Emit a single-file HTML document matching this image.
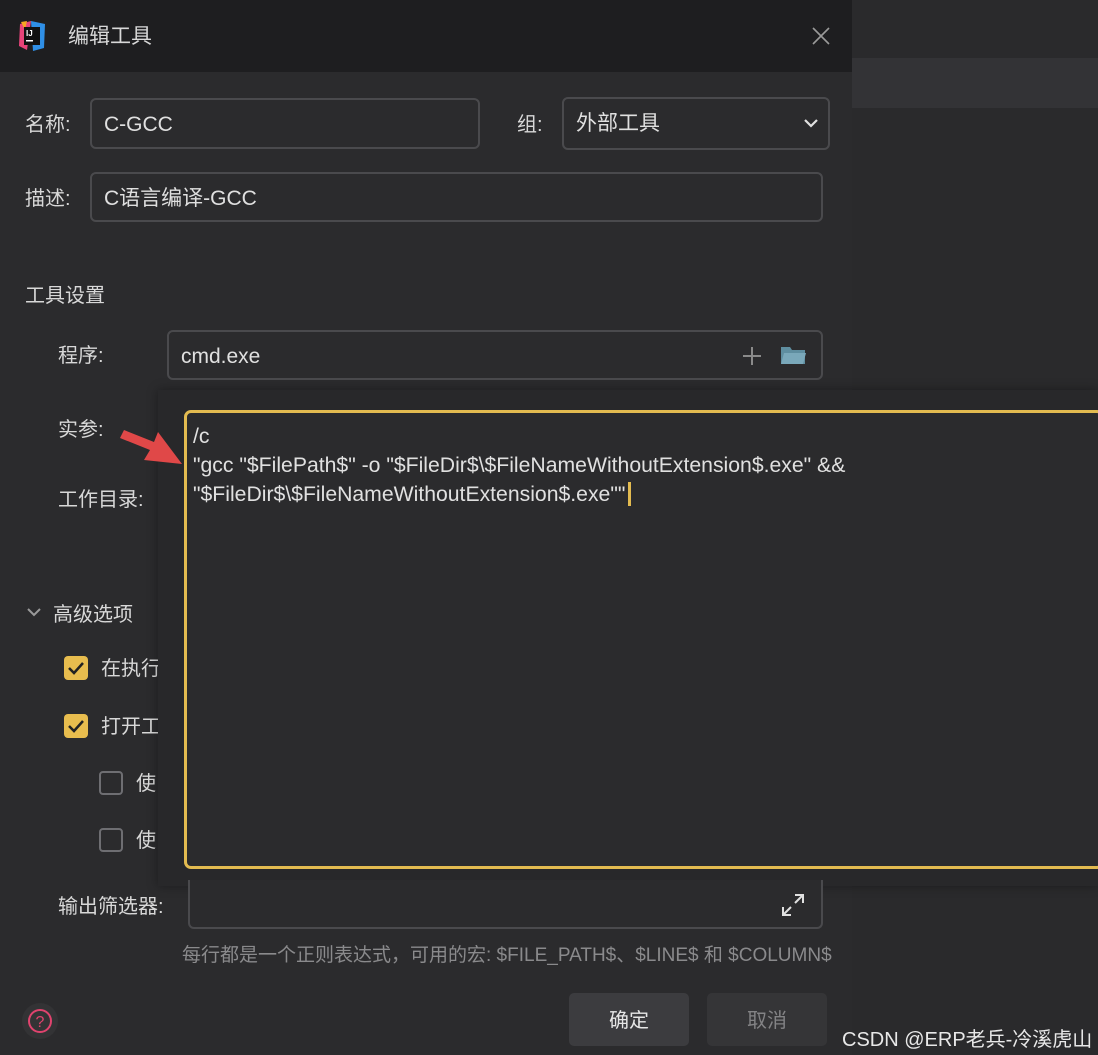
<!DOCTYPE html>
<html><head><meta charset="utf-8"><style>
*{box-sizing:border-box;margin:0;padding:0}
body{width:1098px;height:1055px;overflow:hidden;background:#2b2b2d;font-family:"Liberation Sans","Noto Sans CJK SC",sans-serif;color:#dcdcdc;font-size:20px;position:relative}
.a{position:absolute}
.lbl{position:absolute;font-size:20px;color:#d8d8d8;line-height:24px}
.inp{position:absolute;border:2px solid #4a4a4d;border-radius:6px;background:#2b2b2d;padding-left:12px;padding-top:2px;line-height:46px;color:#e0e0e0;font-size:21px}
.cb{position:absolute;width:24px;height:24px;border-radius:4px;background:#e8bd4e}
.cbe{position:absolute;width:24px;height:24px;border-radius:4px;border:2px solid #6e6e72}
</style></head><body>
<div class="a" style="left:0;top:0;width:852px;height:72px;background:#1e1e20"></div>
<div class="a" style="left:852px;top:0;width:246px;height:1055px;background:#2a2a2c"></div>
<div class="a" style="left:852px;top:58px;width:246px;height:50px;background:#333336"></div>
<svg class="a" style="left:17px;top:20px" width="30" height="32" viewBox="0 0 30 32">
<path d="M3 4 L14 1 L10 30 L2 26 Z" fill="#e8447a"/><path d="M14 1 L28 4 L27 28 L16 31 Z" fill="#2f8fe6"/><path d="M4 2 L10 1 L8 10 Z" fill="#f6a623"/>
<rect x="7" y="7" width="16" height="18" fill="#111"/><text x="9" y="16" font-size="8" fill="#fff" font-family="Liberation Sans" font-weight="bold">IJ</text><rect x="9" y="20" width="7" height="1.5" fill="#fff"/>
</svg>
<div class="lbl" style="left:68px;top:25px;font-size:21px">编辑工具</div>
<svg class="a" style="left:812px;top:27px" width="18" height="18"><path d="M1 1L17 17M17 1L1 17" stroke="#9a9a9a" stroke-width="1.6"/></svg>

<div class="lbl" style="left:25px;top:113px">名称:</div>
<div class="inp" style="left:90px;top:98px;width:390px;height:51px">C-GCC</div>
<div class="lbl" style="left:517px;top:113px">组:</div>
<div class="inp" style="left:562px;top:97px;width:268px;height:53px">外部工具</div>
<svg class="a" style="left:804px;top:118px" width="14" height="10"><path d="M1 2L7 8L13 2" stroke="#e0e0e0" stroke-width="2.2" fill="none"/></svg>
<div class="lbl" style="left:25px;top:187px">描述:</div>
<div class="inp" style="left:90px;top:172px;width:733px;height:50px">C语言编译-GCC</div>

<div class="lbl" style="left:25px;top:284px">工具设置</div>
<div class="lbl" style="left:58px;top:344px">程序:</div>
<div class="inp" style="left:167px;top:330px;width:656px;height:50px">cmd.exe</div>
<svg class="a" style="left:742px;top:346px" width="20" height="20"><path d="M10 1V19M1 10H19" stroke="#8a8a8a" stroke-width="2"/></svg>
<svg class="a" style="left:780px;top:344px" width="27" height="22"><path d="M1 3h9l2 3h13v14H1z" fill="#5f8ea0"/><path d="M4 9h22l-3 11H1z" fill="#7aa8ba"/></svg>

<div class="lbl" style="left:58px;top:418px">实参:</div>
<div class="lbl" style="left:58px;top:488px">工作目录:</div>

<svg class="a" style="left:26px;top:607px" width="16" height="12"><path d="M2 2L8 8L14 2" stroke="#9a9a9a" stroke-width="2" fill="none"/></svg>
<div class="lbl" style="left:53px;top:603px">高级选项</div>
<div class="cb" style="left:64px;top:656px"></div>
<svg class="a" style="left:67px;top:661px" width="18" height="14"><path d="M2 7L7 12L16 2" stroke="#222" stroke-width="2.5" fill="none"/></svg>
<div class="lbl" style="left:101px;top:657px">在执行</div>
<div class="cb" style="left:64px;top:714px"></div>
<svg class="a" style="left:67px;top:719px" width="18" height="14"><path d="M2 7L7 12L16 2" stroke="#222" stroke-width="2.5" fill="none"/></svg>
<div class="lbl" style="left:101px;top:715px">打开工</div>
<div class="cbe" style="left:99px;top:771px"></div>
<div class="lbl" style="left:136px;top:772px">使</div>
<div class="cbe" style="left:99px;top:828px"></div>
<div class="lbl" style="left:136px;top:829px">使</div>

<div class="a" style="left:158px;top:390px;width:940px;height:496px;background:#28282a;box-shadow:0 0 10px rgba(0,0,0,.35)"></div>
<div class="a" style="left:184px;top:410px;width:920px;height:459px;border:3px solid #e3bb50;border-radius:7px;background:#2b2b2d"></div>
<div class="a" style="left:193px;top:422px;font-size:21.2px;line-height:29px;color:#e0e0e0;white-space:pre">/c
"gcc "$FilePath$" -o "$FileDir$\$FileNameWithoutExtension$.exe" &amp;&amp;
"$FileDir$\$FileNameWithoutExtension$.exe""<span style="display:inline-block;width:3px;height:24px;background:#e3bb50;vertical-align:-5px;margin-left:3px"></span></div>
<svg class="a" style="left:118px;top:420px" width="66" height="48"><path d="M6 10 L36 22 L40 12 L64 44 L26 40 L32 30 L2 18 Z" fill="#e04848"/></svg>

<div class="lbl" style="left:58px;top:895px">输出筛选器:</div>
<div class="inp" style="left:188px;top:880px;width:635px;height:49px;border-top:none;border-radius:0 0 6px 6px"></div>
<svg class="a" style="left:781px;top:893px" width="24" height="24"><path d="M14 2H22V10M22 2L14 10M2 14V22H10M2 22L10 14" stroke="#e0e0e0" stroke-width="2" fill="none"/></svg>
<div class="lbl" style="left:182px;top:944px;font-size:19px;color:#8a8a8c;white-space:nowrap">每行都是一个正则表达式，可用的宏: $FILE_PATH$、$LINE$ 和 $COLUMN$</div>

<div class="a" style="left:22px;top:1003px;width:36px;height:36px;border-radius:50%;background:#333335"></div>
<svg class="a" style="left:27px;top:1008px" width="26" height="26"><circle cx="13" cy="13" r="11" stroke="#e0436e" stroke-width="2" fill="none"/><text x="13" y="19" text-anchor="middle" font-size="16" fill="#e0436e" font-family="Liberation Sans">?</text></svg>
<div class="a" style="left:569px;top:993px;width:120px;height:53px;border-radius:5px;background:#3c3c3f;text-align:center;line-height:56px;color:#e6e6e6">确定</div>
<div class="a" style="left:707px;top:993px;width:120px;height:53px;border-radius:5px;background:#353537;text-align:center;line-height:56px;color:#838385">取消</div>
<div class="a" style="left:842px;top:1023px;font-size:20px;color:#e8e8e8;white-space:nowrap">CSDN @ERP老兵-冷溪虎山</div>
</body></html>
